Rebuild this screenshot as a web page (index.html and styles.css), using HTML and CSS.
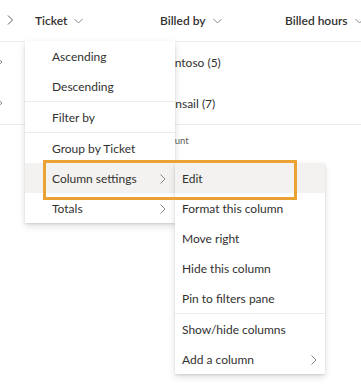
FILE: index.html
```html
<!DOCTYPE html>
<html lang="en">
<head>
<meta charset="utf-8">
<title>Column menu</title>
<link rel="stylesheet" href="styles.css">
</head>
<body>
<div class="grid">
  <div class="header">
    <div class="cell expand">
      <svg class="chev-right" width="7" height="10" viewBox="0 0 7 10"><path d="M1 0.5 L5.5 5 L1 9.5" fill="none" stroke="#605e5c" stroke-width="1"/></svg>
    </div>
    <div class="cell col-ticket">Ticket <svg class="chev-down" width="9" height="6" viewBox="0 0 9 6"><path d="M0.5 1 L4.5 5 L8.5 1" fill="none" stroke="#8a8886" stroke-width="1"/></svg></div>
    <div class="cell col-billed">Billed by <svg class="chev-down" width="9" height="6" viewBox="0 0 9 6"><path d="M0.5 1 L4.5 5 L8.5 1" fill="none" stroke="#8a8886" stroke-width="1"/></svg></div>
    <div class="cell col-hours">Billed hours <svg class="chev-down" width="9" height="6" viewBox="0 0 9 6"><path d="M0.5 1 L4.5 5 L8.5 1" fill="none" stroke="#8a8886" stroke-width="1"/></svg></div>
  </div>
  <div class="group-row">
    <div class="cell expand"><svg class="chev-cut" width="3" height="8" viewBox="0 0 3 8"><path d="M-2 0.5 L2 4 L-2 7.5" fill="none" stroke="#8a8886" stroke-width="1"/></svg></div>
    <div class="cell col-ticket"></div>
    <div class="cell col-billed">Contoso (5)</div>
  </div>
  <div class="group-row last">
    <div class="cell expand"><svg class="chev-cut" width="3" height="8" viewBox="0 0 3 8"><path d="M-2 0.5 L2 4 L-2 7.5" fill="none" stroke="#8a8886" stroke-width="1"/></svg></div>
    <div class="cell col-ticket"></div>
    <div class="cell col-billed">Winsail (7)</div>
  </div>
  <div class="count-row">
    <div class="cell expand"></div>
    <div class="cell col-ticket"></div>
    <div class="cell col-count">Count</div>
  </div>
</div>

<div class="menu menu-main">
  <div class="item indent">Ascending</div>
  <div class="item indent">Descending</div>
  <div class="sep"></div>
  <div class="item indent">Filter by</div>
  <div class="sep"></div>
  <div class="item indent">Group by Ticket</div>
  <div class="item indent active">Column settings <svg class="sub-chev" width="6" height="10" viewBox="0 0 6 10"><path d="M0.5 0.5 L5 5 L0.5 9.5" fill="none" stroke="#8a8886" stroke-width="1"/></svg></div>
  <div class="item indent">Totals <svg class="sub-chev" width="6" height="10" viewBox="0 0 6 10"><path d="M0.5 0.5 L5 5 L0.5 9.5" fill="none" stroke="#8a8886" stroke-width="1"/></svg></div>
</div>

<div class="menu menu-sub">
  <div class="item active">Edit</div>
  <div class="item">Format this column</div>
  <div class="item">Move right</div>
  <div class="item">Hide this column</div>
  <div class="item">Pin to filters pane</div>
  <div class="sep"></div>
  <div class="item">Show/hide columns</div>
  <div class="item">Add a column <svg class="sub-chev" width="6" height="10" viewBox="0 0 6 10"><path d="M0.5 0.5 L5 5 L0.5 9.5" fill="none" stroke="#8a8886" stroke-width="1"/></svg></div>
</div>

<div class="highlight"></div>
</body>
</html>
```

FILE: styles.css
```css
* { box-sizing: border-box; }
html, body {
  margin: 0;
  padding: 0;
  background: #ffffff;
}
body {
  font-family: Lato, "Open Sans", sans-serif;
  font-size: 12px;
  color: #323130;
  position: relative;
  width: 361px;
  height: 389px;
  overflow: hidden;
}
.grid {
  display: flex;
  flex-direction: column;
  width: 361px;
}
.header, .group-row, .count-row {
  display: flex;
  align-items: center;
  white-space: nowrap;
}
.header {
  height: 42px;
  border-bottom: 1px solid #edebe9;
  font-weight: 600;
  font-size: 12px;
  padding-bottom: 1px;
}
.group-row {
  height: 41px;
  font-size: 12px;
}
.group-row.last {
  height: 42px;
  border-bottom: 1px solid #edebe9;
}
.count-row {
  height: 30px;
  font-size: 9.5px;
  color: #605e5c;
}
.cell {
  display: flex;
  align-items: center;
  gap: 7px;
  flex: none;
}
.expand { width: 35px; padding-left: 7px; }
.group-row .expand { padding-left: 0; }
.col-ticket { width: 125px; }
.col-billed { width: 125px; }
.col-count { padding-left: 3px; }
.col-hours { flex: 1; }
.chev-down { margin-top: 1px; }
.chev-cut { display: block; margin-top: -2px; }

.menu {
  position: absolute;
  width: 150px;
  background: #ffffff;
  box-shadow: 0 3.2px 7.2px rgba(0,0,0,0.132), 0 0.6px 1.8px rgba(0,0,0,0.108);
  font-size: 12px;
  color: #323130;
}
.menu-main { left: 25px; top: 41px; z-index: 2; }
.menu-sub { left: 175px; top: 163px; z-index: 3; }
.item {
  height: 30px;
  display: flex;
  align-items: center;
  justify-content: space-between;
  padding: 1px 9px 0 7px;
  white-space: nowrap;
}
.item.indent { padding-left: 27px; }
.menu-sub .item { padding-right: 8px; }
.item.active { background: #f3f2f1; }
.sep {
  height: 1px;
  background: #edebe9;
}
.highlight {
  position: absolute;
  left: 43px;
  top: 160px;
  width: 254px;
  height: 40px;
  border: 3px solid #eba235;
  z-index: 5;
}
```
